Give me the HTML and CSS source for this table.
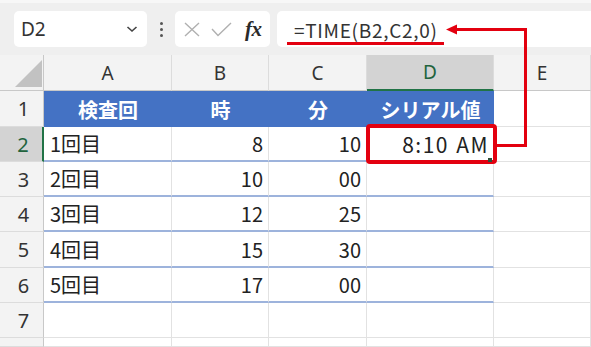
FILE: index.html
```html
<!DOCTYPE html>
<html lang="ja">
<head>
<meta charset="utf-8">
<title>TIME関数</title>
<link rel="stylesheet" href="styles.css">
</head>
<body>
<div class="app">
  <header class="toolbar">
    <div class="namebox">
      <span class="ref">D2</span>
      <svg class="chev" width="12" height="8" viewBox="0 0 12 8"><path d="M1.5 2 L6 6 L10.5 2" fill="none" stroke="#444" stroke-width="1.6"/></svg>
    </div>
    <div class="grip"><i></i><i></i><i></i></div>
    <div class="fxbox">
      <svg class="ico" width="18" height="15" viewBox="0 0 18 15"><path d="M2 1 L16 14 M16 1 L2 14" stroke="#b0b0b0" stroke-width="1.4" fill="none"/></svg>
      <svg class="ico" width="21" height="15" viewBox="0 0 21 15"><path d="M1 7 L7 13.5 L20 1" stroke="#b0b0b0" stroke-width="1.4" fill="none"/></svg>
      <span class="fx">fx</span>
    </div>
    <div class="formula"><span class="expr">=TIME(B2,C2,0)</span></div>
  </header>

  <div class="sheet">
    <div class="corner"><span class="tri"></span></div>
    <div class="colhead">A</div>
    <div class="colhead">B</div>
    <div class="colhead">C</div>
    <div class="colhead sel">D</div>
    <div class="colhead">E</div>

    <div class="rowhead">1</div>
    <div class="th">検査回</div>
    <div class="th">時</div>
    <div class="th">分</div>
    <div class="th">シリアル値</div>
    <div class="cell"></div>

    <div class="rowhead sel">2</div>
    <div class="cell tbl">1回目</div>
    <div class="cell tbl num">8</div>
    <div class="cell tbl num">10</div>
    <div class="cell tbl num time">8:10 AM</div>
    <div class="cell"></div>

    <div class="rowhead">3</div>
    <div class="cell tbl">2回目</div>
    <div class="cell tbl num">10</div>
    <div class="cell tbl num">00</div>
    <div class="cell tbl"></div>
    <div class="cell"></div>

    <div class="rowhead">4</div>
    <div class="cell tbl">3回目</div>
    <div class="cell tbl num">12</div>
    <div class="cell tbl num">25</div>
    <div class="cell tbl"></div>
    <div class="cell"></div>

    <div class="rowhead">5</div>
    <div class="cell tbl">4回目</div>
    <div class="cell tbl num">15</div>
    <div class="cell tbl num">30</div>
    <div class="cell tbl"></div>
    <div class="cell"></div>

    <div class="rowhead">6</div>
    <div class="cell tbl">5回目</div>
    <div class="cell tbl num">17</div>
    <div class="cell tbl num">00</div>
    <div class="cell tbl"></div>
    <div class="cell"></div>

    <div class="rowhead">7</div>
    <div class="cell"></div>
    <div class="cell"></div>
    <div class="cell"></div>
    <div class="cell"></div>
    <div class="cell"></div>

    <div class="rowhead"></div>
    <div class="cell"></div>
    <div class="cell"></div>
    <div class="cell"></div>
    <div class="cell"></div>
    <div class="cell"></div>
  </div>

  <!-- callout: underline under the formula, frame round D2, arrow linking them -->
  <svg class="marks" width="591" height="347" viewBox="0 0 591 347">
    <rect x="287" y="42" width="157" height="3" fill="#e3000f"/>
    <rect x="368" y="126" width="127" height="36" rx="2" fill="none" stroke="#e3000f" stroke-width="4"/>
    <rect x="488" y="158" width="4" height="4" fill="#2f4f3a"/>
    <path d="M497 145.5 H525.5 V29.5 H455" fill="none" stroke="#e3000f" stroke-width="3"/>
    <path d="M446 29.5 L457 24.5 L457 34.5 Z" fill="#e3000f"/>
  </svg>
</div>
</body>
</html>
```

FILE: styles.css
```css
* { box-sizing: border-box; }

html, body {
  margin: 0;
  padding: 0;
  background: #ffffff;
}

.app {
  position: relative;
  width: 591px;
  height: 347px;
  overflow: hidden;
  font-family: "Noto Sans CJK JP", "Noto Sans", sans-serif;
  color: #222;
}

/* ---------- formula bar ---------- */
.toolbar {
  height: 55px;
  display: flex;
  align-items: flex-start;
  padding: 8px 0 0 14px;
  background: #efefef;
  border-top: 3px solid #f7f7f7;
}

.namebox {
  width: 133px;
  height: 36px;
  background: #fff;
  border-radius: 5px;
  display: flex;
  align-items: center;
  justify-content: space-between;
  padding: 0 9px 0 7px;
}

.ref {
  font-family: "Noto Sans", sans-serif;
  font-size: 19px;
  color: #333;
}

.grip {
  width: 28px;
  height: 36px;
  display: flex;
  flex-direction: column;
  align-items: center;
  justify-content: center;
  gap: 3px;
}

.grip i {
  width: 3px;
  height: 3px;
  border-radius: 50%;
  background: #555;
}

.fxbox {
  width: 95px;
  height: 36px;
  background: #fff;
  border-radius: 5px;
  display: flex;
  align-items: center;
  padding-left: 8px;
  gap: 10px;
}

.fx {
  font-family: "Liberation Serif", serif;
  font-style: italic;
  font-weight: 700;
  font-size: 21px;
  color: #2a2a2a;
  margin-left: 3px;
  letter-spacing: -0.5px;
}

.formula {
  margin-left: 7px;
  flex: 1;
  height: 36px;
  background: #fff;
  border-radius: 5px 0 0 5px;
  display: flex;
  align-items: center;
  padding-left: 17px;
}

.expr {
  font-size: 19px;
  letter-spacing: 0.7px;
  color: #333;
}

/* ---------- worksheet ---------- */
.sheet {
  display: grid;
  grid-template-columns: 44px 128px 97px 98px 127px 97px;
  grid-template-rows: 36px 36px 35px 35px 35px 36px 35px 35px 9px;
}

.corner {
  background: #f3f3f3;
  border-right: 1px solid #c8c8c8;
  border-bottom: 1px solid #c8c8c8;
  padding: 5px 1px 3px 15px;
  display: flex;
}

.tri {
  flex: 1;
  background: #c2c2c2;
  clip-path: polygon(100% 0, 100% 100%, 0 100%);
}

.colhead {
  background: #f3f3f3;
  border-right: 1px solid #dcdcdc;
  border-bottom: 1px solid #c8c8c8;
  display: flex;
  align-items: center;
  justify-content: center;
  font-family: "Noto Sans", sans-serif;
  font-size: 19px;
  color: #333;
}

.colhead.sel {
  background: #d3d3d3;
  color: #21633d;
  border-bottom: 2px solid #217346;
}

.rowhead {
  background: #f3f3f3;
  border-right: 1px solid #c8c8c8;
  border-bottom: 1px solid #dcdcdc;
  display: flex;
  align-items: center;
  justify-content: center;
  font-family: "Noto Sans", sans-serif;
  font-size: 20px;
  color: #333;
  padding-left: 4px;
}

.rowhead.sel {
  background: #d3d3d3;
  color: #21633d;
  border-right: 2px solid #217346;
}

.th {
  background: #4472c4;
  color: #fff;
  font-weight: 700;
  font-size: 20px;
  display: flex;
  align-items: center;
  justify-content: center;
}

.cell {
  border-right: 1px solid #e2e2e2;
  border-bottom: 1px solid #e2e2e2;
  display: flex;
  align-items: center;
  padding: 0 5px 0 6px;
  font-size: 20px;
  color: #222;
  white-space: nowrap;
}

.cell.tbl {
  border-bottom: 2px solid #9db3dc;
}

.cell.num {
  justify-content: flex-end;
}

.cell.time {
  font-size: 21px;
  letter-spacing: 1.5px;
  word-spacing: 1px;
  padding-right: 4px;
}

/* annotations drawn over the grid */
.marks {
  position: absolute;
  left: 0;
  top: 0;
  pointer-events: none;
}
```
